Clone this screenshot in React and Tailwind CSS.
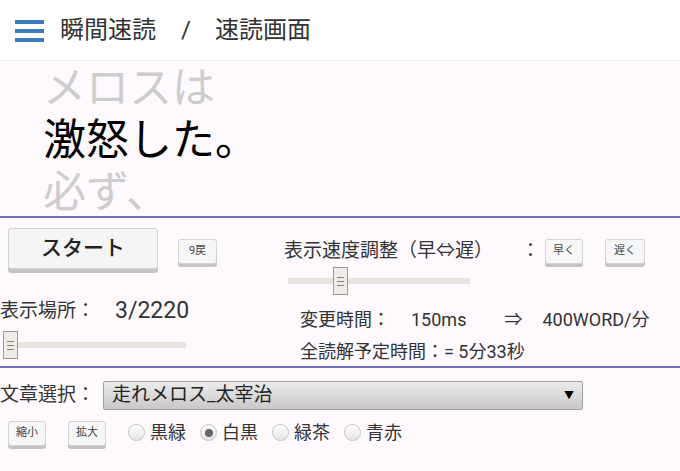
import React, { useState } from "react";

const SmallBtn = ({ children, className = "" }) => (
  <button
    className={`h-[25px] rounded-[3px] border border-[#d4d4d4] bg-[#f6f6f6] text-[11px] text-[#444] shadow-[0_3px_0_#c4c4c4] flex items-center justify-center ${className}`}
  >
    {children}
  </button>
);

const Thumb = () => (
  <div className="w-[15px] h-[28px] border border-[#a09a94] bg-[#efebe7] flex flex-col items-center justify-center gap-[3px]">
    <span className="block w-[7px] h-[1px] bg-[#8a847e]" />
    <span className="block w-[7px] h-[1px] bg-[#8a847e]" />
    <span className="block w-[7px] h-[1px] bg-[#8a847e]" />
  </div>
);

const Slider = ({ width, offset }) => (
  <div className="relative h-[28px]" style={{ width }}>
    <div className="absolute left-0 right-0 top-[11px] h-[6px] bg-[#e8e3df]" />
    <div className="absolute top-0" style={{ left: offset }}>
      <Thumb />
    </div>
  </div>
);

const Radio = ({ label, checked, onClick }) => (
  <label className="flex items-center gap-[5px] cursor-pointer" onClick={onClick}>
    <span className="w-[17px] h-[17px] rounded-full border border-[#c4c4c4] bg-gradient-to-b from-white to-[#e4e4e4] flex items-center justify-center">
      {checked && <span className="w-[8px] h-[8px] rounded-full bg-[#666]" />}
    </span>
    <span className="text-[18px] text-[#333]">{label}</span>
  </label>
);

export default function App() {
  const [theme, setTheme] = useState("白黒");

  return (
    <div className="w-[680px] h-[471px] overflow-hidden bg-[#fdf9fd] font-[Roboto,'Noto_Sans_CJK_JP',sans-serif] text-[#333]">
      {/* Header */}
      <div className="h-[61px] bg-white border-b border-[#ececec] flex items-center pl-[15px]">
        <div className="w-[29px] flex flex-col gap-[5px] mt-[2px]">
          <span className="block h-[4px] bg-[#3d7abd]" />
          <span className="block h-[4px] bg-[#3d7abd]" />
          <span className="block h-[4px] bg-[#3d7abd]" />
        </div>
        <div className="ml-[16px] text-[24px] text-[#333] flex items-center">
          <span>瞬間速読</span>
          <span className="ml-[25px]">/</span>
          <span className="ml-[24px]">速読画面</span>
        </div>
      </div>

      {/* Reader */}
      <div className="h-[155px] pl-[43px] text-[43px] leading-[52px]">
        <div className="text-[#cdcdcd] pt-[1px]">メロスは</div>
        <div className="text-black">激怒した。</div>
        <div className="text-[#cdcdcd]">必ず、</div>
      </div>
      <div className="h-[2px] bg-[#7272b2]" />

      {/* Controls */}
      <div className="h-[148px] flex">
        <div className="w-[284px] pt-[10px]">
          <div className="flex items-start">
            <button className="ml-[8px] w-[150px] h-[41px] rounded-[3px] border border-[#d2d2d2] bg-[#f5f5f5] shadow-[0_4px_0_#c4c4c4] text-[21px] font-medium text-[#222]">
              スタート
            </button>
            <SmallBtn className="ml-[20px] mt-[11px] w-[39px]">9戻</SmallBtn>
          </div>
          <div className="mt-[28px] flex items-center h-[28px]">
            <span className="text-[19px]">表示場所：</span>
            <span className="ml-[20px] text-[23px]">3/2220</span>
          </div>
          <div className="mt-[6px] ml-[3px]">
            <Slider width={183} offset={0} />
          </div>
        </div>

        <div className="flex-1 pt-[20px]">
          <div className="flex items-start">
            <span className="text-[19px] leading-[26px]">表示速度調整（早⇔遅）</span>
            <span className="ml-[28px] text-[19px] leading-[26px]">：</span>
            <SmallBtn className="ml-[5px] mt-[1px] w-[38px]">早く</SmallBtn>
            <SmallBtn className="ml-[22px] mt-[1px] w-[40px]">遅く</SmallBtn>
          </div>
          <div className="ml-[4px] mt-[3px]">
            <Slider width={182} offset={45} />
          </div>
          <div className="ml-[16px] mt-[12px] text-[18px] leading-[26px] flex">
            <span>変更時間：</span>
            <span className="ml-[21px]">150ms</span>
            <span className="ml-[38px]">⇒</span>
            <span className="ml-[20px]">400WORD/分</span>
          </div>
          <div className="ml-[16px] mt-[6px] text-[18px] leading-[26px]">
            全読解予定時間：= 5分33秒
          </div>
        </div>
      </div>
      <div className="h-[2px] bg-[#7272b2]" />

      {/* Bottom */}
      <div className="pt-[13px]">
        <div className="flex items-center">
          <span className="text-[19px] w-[103px]">文章選択：</span>
          <div className="w-[480px] h-[29px] rounded-[2px] border border-[#a0a0a0] bg-gradient-to-b from-[#ececec] to-[#c8c8c8] flex items-center justify-between pl-[8px] pr-[8px]">
            <span className="text-[19px] text-[#222]">走れメロス_太宰治</span>
            <span className="text-[10px] text-black">▼</span>
          </div>
        </div>
        <div className="mt-[9px] flex items-start">
          <SmallBtn className="ml-[8px] mt-[2px] w-[38px]">縮小</SmallBtn>
          <SmallBtn className="ml-[22px] mt-[2px] w-[38px]">拡大</SmallBtn>
          <div className="ml-[22px] flex items-center gap-[14px]">
            {["黒緑", "白黒", "緑茶", "青赤"].map((t) => (
              <Radio key={t} label={t} checked={theme === t} onClick={() => setTheme(t)} />
            ))}
          </div>
        </div>
      </div>
    </div>
  );
}
